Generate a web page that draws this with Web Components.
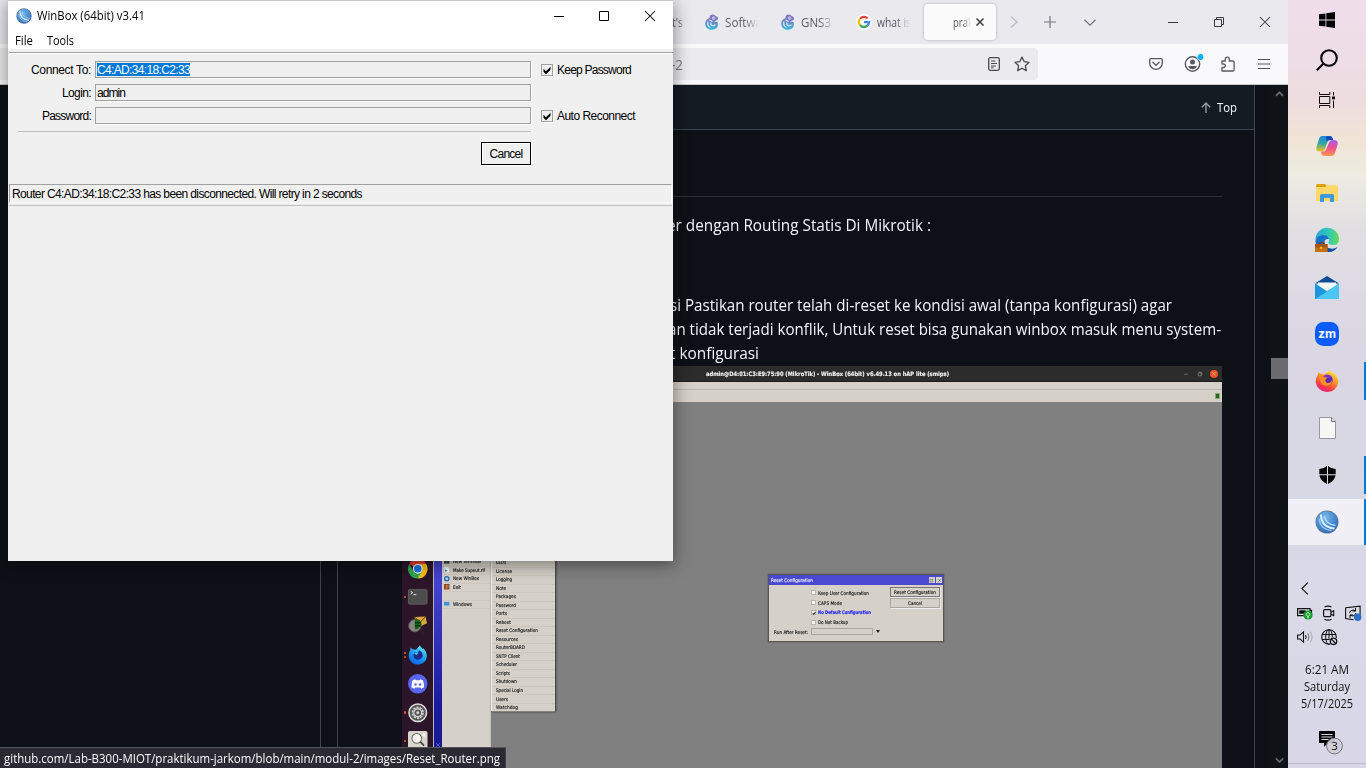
<!DOCTYPE html>
<html lang="en">
<head>
<meta charset="utf-8">
<title>Desktop</title>
<style>
html,body{margin:0;height:100%;overflow:hidden;background:#0d1117}
body{font-family:"Open Sans","Noto Sans",sans-serif;font-size:12px}
</style>
</head>
<body>
<desktop-screen>
  <browser-window slot="browser">
    <doc-page></doc-page>
  </browser-window>
  <winbox-window slot="window">
    <field-row slot="fields" label="Connect To:" lw="60"><mark><fit-text track w="93">C4:AD:34:18:C2:33</fit-text></mark></field-row>
    <field-row slot="fields" label="Login:" lw="29"><fit-text track w="28">admin</fit-text></field-row>
    <field-row slot="fields" label="Password:" lw="49"></field-row>
    <check-box slot="checks"><fit-text track w="74">Keep Password</fit-text></check-box>
    <check-box slot="checks"><fit-text track w="78">Auto Reconnect</fit-text></check-box>
    <fit-text track slot="status" w="350">Router C4:AD:34:18:C2:33 has been disconnected. Will retry in 2 seconds</fit-text>
  </winbox-window>
  <task-bar slot="taskbar"></task-bar>
</desktop-screen>
<script>
const define = (name, css, html, setup) => {
  const t = document.createElement('template');
  t.innerHTML = `<style>:host,*{box-sizing:border-box}${css}</style>${html}`;
  customElements.define(name, class extends HTMLElement {
    constructor() {
      super();
      this.attachShadow({mode: 'open'}).append(t.content.cloneNode(true));
    }
    connectedCallback() { if (setup) setup(this, this.shadowRoot); }
  });
};

const ICONS = {
  winbox: ['0 0 24 24', '<defs><radialGradient id="g" cx=".4" cy=".3" r=".8"><stop offset="0" stop-color="#7fb9ea"/><stop offset=".6" stop-color="#4289d0"/><stop offset="1" stop-color="#2a64ae"/></radialGradient></defs><circle cx="12" cy="12" r="11.5" fill="#66788c"/><circle cx="12" cy="12" r="10.8" fill="url(#g)"/><path d="M6 4.5C6 12 10 17.500 19.500 18.500" stroke="#dcecfb" stroke-width="1.900" fill="none"/><path d="M9.500 6C10 11 13 14.500 20.500 15.500" stroke="#b5d7f4" stroke-width="1.400" fill="none"/><path d="M4 9C5 15 9 20 16.500 20.500" stroke="#9dc7ee" stroke-width="1.300" fill="none"/>'],
  min: ['0 0 10 10', '<path d="M0 5.500h10" stroke="currentColor"/>'],
  max: ['0 0 10 10', '<path d="M.5.5h9v9h-9z" stroke="currentColor" fill="none"/>'],
  close: ['0 0 10 10', '<path d="M0 0l10 10M10 0L0 10" stroke="currentColor" stroke-width="1.050"/>'],
  restore: ['0 0 10 10', '<path d="M.5 2.500h7v7h-7zM2.500 2.500v-2h7v7h-2" stroke="currentColor" fill="none"/>'],
  tabclose: ['0 0 10 10', '<path d="M1.500 1.500l7 7M8.500 1.500l-7 7" stroke="#3c3b42" stroke-width="1.500"/>'],
  gns: ['0 0 16 16', '<defs><linearGradient id="g" x2="0" y2="1"><stop offset="0" stop-color="#8e6bc9"/><stop offset=".5" stop-color="#6b87c4"/><stop offset="1" stop-color="#2fb9dc"/></linearGradient></defs><path d="M6 1.500Q9-.5 11 1.500L13.500 3Q14.800 4.500 13.500 6L10 7.500 13.500 8Q14.500 12 12.500 14 10 16.300 5.500 15.500 1.200 14 1.200 9.500 1.300 5.500 5.500 4Z" fill="url(#g)"/><circle cx="9.800" cy="4" r="1.600" fill="#f3f0fa"/><circle cx="10" cy="4" r=".7" fill="#474769"/><path d="M4 7.500Q2.800 12 6.500 13.500M7 8.500q-1 2.500 1.500 3.200 2.500.2 2.500-1.500M5.500 6l3 1.500" stroke="#e6f2fb" fill="none" stroke-width="1.100"/>'],
  google: ['0 0 16 16', '<circle cx="8" cy="8" r="8" fill="#fff"/><g fill="none" stroke-width="2.300"><path d="M4 4.900A5 5 0 0 1 11.600 4.400" stroke="#ea4335"/><path d="M4 4.900A5 5 0 0 0 4 11.100" stroke="#fbbc05"/><path d="M4 11.100A5 5 0 0 0 11.300 11.700" stroke="#34a853"/><path d="M11.300 11.700A5 5 0 0 0 13 8.200H8" stroke="#4285f4"/></g>'],
  chevr: ['0 0 8 12', '<path d="M1 .5l6 5.500-6 5.500" stroke="#bab9c0" stroke-width="1.300" fill="none"/>'],
  plus: ['0 0 12 12', '<path d="M6 0v12M0 6h12" stroke="#77767e" stroke-width="1.200"/>'],
  chevd: ['0 0 12 7', '<path d="M.5.8L6 6.200 11.500.8" stroke="#77767e" stroke-width="1.300" fill="none"/>'],
  reader: ['0 0 12 14', '<rect x=".7" y=".7" width="10.600" height="12.600" rx="1.500" fill="none" stroke="#4b4a53" stroke-width="1.300"/><path d="M3 4h4.500M3 6.500h6M3 9h5M3 10.800h2.500" stroke="#4b4a53"/>'],
  star: ['0 0 16 16', '<path d="M8 1.100l2.100 4.500 4.900.7-3.600 3.400.9 4.900L8 12.200l-4.300 2.400.9-4.900L1 6.300l4.900-.7z" fill="none" stroke="#4b4a53" stroke-width="1.300" stroke-linejoin="round"/>'],
  pocket: ['0 0 14 12', '<path d="M2 .7h10q1.300 0 1.300 1.300v3.300a6.300 6 0 0 1-12.600 0V2Q.7.7 2 .7z" fill="none" stroke="#5b5a63" stroke-width="1.300"/><path d="M3.800 4.300L7 7.300l3.200-3" stroke="#5b5a63" stroke-width="1.300" fill="none" stroke-linecap="round"/>'],
  account: ['0 0 20 18', '<circle cx="8.500" cy="10" r="7.200" fill="none" stroke="#5b5a63" stroke-width="1.400"/><circle cx="8.500" cy="8" r="2.500" fill="#5b5a63"/><path d="M4.200 11.900h8.600q-1 3.300-4.300 3.300t-4.300-3.300z" fill="#5b5a63"/><circle cx="16.500" cy="3" r="3.500" fill="#f9f9fb"/><circle cx="16.500" cy="3" r="2.900" fill="#00b3ff"/>'],
  ext: ['0 0 14 16', '<path d="M1 5h3.300V3.200a2 2 0 0 1 4 0V5h3.500q1.300 0 1.300 1.300v7.400q0 1.300-1.300 1.300H1v-3.500h1.500a1.700 1.700 0 0 0 0-3.500H1z" fill="none" stroke="#5b5a63" stroke-width="1.300" stroke-linejoin="round"/>'],
  burger: ['0 0 12 12', '<path d="M0 1.500h12M0 6h12M0 10.500h12" stroke="#5b5a63" stroke-width="1.200"/>'],
  up: ['0 0 10 11', '<path d="M5 11V1M.8 5.200L5 1l4.200 4.200" stroke="#9198a1" stroke-width="1.400" fill="none"/>'],
  sup: ['0 0 10 6', '<path d="M1 5.500l4-4 4 4" stroke="#69696d" stroke-width="2" fill="none"/>'],
  sdown: ['0 0 10 6', '<path d="M1 .5l4 4 4-4" stroke="#69696d" stroke-width="2" fill="none"/>'],
  start: ['0 0 16 16', '<path d="M0 2.300L6.500 1.400V7.600H0zM7.300 1.200L16 0V7.600H7.300zM0 8.400H6.500V14.600L0 13.700zM7.300 8.400H16V16L7.300 14.800z" fill="#000"/>'],
  search: ['0 0 22 22', '<circle cx="13" cy="9" r="7.800" fill="none" stroke="#0d090b" stroke-width="2.100"/><path d="M7.300 14.700L.8 21.200" stroke="#0d090b" stroke-width="2.200"/>'],
  task: ['0 0 16 16', '<path d="M.5 4.500h10.300v7H.5zM.5 0v2.500h10.300V0M.5 16v-2.500h10.300V16M14.500 0v3.500M14.500 8.500V16" stroke="#0d090b" fill="none"/><rect x="13" y="4.500" width="3" height="2.800" fill="#000"/>'],
  copilot: ['0 0 22 20', '<defs><linearGradient id="a" x2="0" y2="1"><stop offset="0" stop-color="#1a85e4"/><stop offset=".5" stop-color="#35a8a0"/><stop offset="1" stop-color="#f2c316"/></linearGradient><linearGradient id="b" x2="0" y2="1"><stop offset="0" stop-color="#a45cf0"/><stop offset=".5" stop-color="#ef4f8e"/><stop offset="1" stop-color="#fb9a4e"/></linearGradient></defs><path d="M6 0h8q2 0 2.700 2.400L17 4h-3q-2 0-2.800 2.500L9 13q-.8 2.500-3 2.500H3.500Q-.5 15.500.4 11.500L3 3Q3.900 0 6 0z" fill="url(#a)"/><path d="M10 1Q11-.1 13.500 0 16 .1 16.700 2.500L17.200 4H13.500Q11 4 10.500 5.700z" fill="#1749b8"/><path d="M16 20H8q-2 0-2.500-2L5 15.500h2.500q2 0 2.800-2.500L13 6.500Q13.800 4 16 4h2.500q4.100.5 3.100 4.500L19 17q-.9 3-3 3z" fill="url(#b)"/>'],
  explorer: ['0 0 22 18', '<path d="M0 1.500Q0 0 1.500 0H9l1.500 1.500V5H0z" fill="#e0a012"/><path d="M0 3h9.500L11 1.300h9.500Q22 1.300 22 2.800V17H0z" fill="#ffd869"/><path d="M4 18v-6.500Q4 10 5.500 10h11Q18 10 18 11.500V18h-4v-4H8v4z" fill="#3f9ad9"/>'],
  edge: ['0 0 24 24', '<defs><linearGradient id="a"><stop offset="0" stop-color="#2aa6d8"/><stop offset=".6" stop-color="#35c9b4"/><stop offset="1" stop-color="#64de54"/></linearGradient></defs><path d="M.5 12A11.700 11.700 0 0 1 24 11q.2 6-6 6-5 0-4.500-3 1-1 .5-2.500Q12.500 7.500 8 7.500 3 7.500.5 12z" fill="url(#a)"/><path d="M.3 13Q2 7 8 7q4.500 0 6 4Q9 10.500 9.500 15q1 5.500 7 5.700 4 .2 6-1.700Q19 24.500 12 24 1 23.500.3 13z" fill="#1672c8"/><path d="M9.300 14q0 6.700 8.200 6.900 3 0 5-1.900-3 5-10 5Q6 20 9.300 14z" fill="#154e9c"/><rect y="16" width="12.500" height="8" fill="#c7700f"/><path d="M0 16h12.500v3.500H0z" fill="#a8560b"/><path d="M4 16v-1.300h4.500V16" stroke="#6f3a09" fill="none"/><rect x="5.200" y="18.800" width="2" height="2" fill="#ffd04d"/>'],
  mail: ['0 0 24 23', '<path d="M0 7.500L12 0l12 7.500z" fill="#0e4d92"/><path d="M3 6.500h18V14H3z" fill="#f4f6f8"/><path d="M0 7.500l12 8L24 7.500V23H0z" fill="#2fb0ea"/><path d="M0 23L24 7.500V23z" fill="#49c6f3"/><path d="M0 7.500l12 8L0 23z" fill="#1b96dd"/>'],
  zoom: ['0 0 24 24', '<rect width="24" height="24" rx="8.500" fill="#0b5cff"/><text x="12" y="15.800" text-anchor="middle" font-family="Inter,sans-serif" font-weight="700" font-size="12" textLength="18" lengthAdjust="spacingAndGlyphs" fill="#fff">zm</text>'],
  firefox: ['0 0 24 24', '<defs><linearGradient id="a" x1=".8" y1="0" x2=".3" y2="1"><stop offset="0" stop-color="#fff04a"/><stop offset=".4" stop-color="#ff9a20"/><stop offset=".75" stop-color="#ff3c45"/><stop offset="1" stop-color="#e2208a"/></linearGradient></defs><path d="M14.500 1Q16 3 18.500 5v-1.500Q23.500 8 23.300 13.500A11.300 10.800 0 0 1 .8 13Q.5 8.500 3 5.500L3.300 3 6 5Q8 4.800 9 5.500 10 4.500 12 3.500 13 3 14.500 1z" fill="url(#a)"/><circle cx="12.300" cy="11" r="5.500" fill="#7a35cf"/><path d="M3.500 8.500q4-2 7 0l4 .1Q14 10.500 11 11.300q-.5 2.200 1.300 2.300 2.700 0 4.700-1.800-.5 5-5.500 5T5.500 12z" fill="#ff8f1f"/><path d="M10.500 10.500q3-3.500 6-1.500 1 4-2.500 5-3 .5-3.500-1.800z" fill="#5a2fb5"/>'],
  file: ['0 0 17 22', '<path d="M.5.5h12l4 4v17H.5z" fill="#f7f7f8" stroke="#98989c"/><path d="M12.500.5v4h4" fill="#dcdce0" stroke="#77777b"/>'],
  shield: ['0 0 17 18', '<path d="M8 0v8.200H.3V3Q4.500 3 8 0zM9 0q3.500 3 7.700 3v5.200H9zM.4 9.200H8V18Q1.500 15 .4 9.200zM9 9.200h7.600Q15.500 15 9 18z" fill="#050505"/>'],
  left: ['0 0 8 14', '<path d="M7.300.7L1 7l6.300 6.300" stroke="#111" stroke-width="1.200" fill="none"/>'],
  battery: ['0 0 17 14', '<path d="M.6 2.600H13v1.700h1.500v4H13v1.300H.6z" fill="none" stroke="#111" stroke-width="1.200"/><path d="M2.200 4.300h6.500v3.500H2.200z" fill="#111"/><circle cx="11" cy="9" r="4.600" fill="#0f9d2b"/><path d="M11 6.300l2 2.200-2 2.200-2-2.200zM11 10v2.500" stroke="#fff" fill="none" stroke-width=".9"/>'],
  cam: ['0 0 14 16', '<rect x="1.600" y="4.600" width="7.300" height="7" rx="1" fill="none" stroke="#111" stroke-width="1.200"/><path d="M9 7.200l2.700-1.600v5L9 9.200M2.500 2Q6 .2 9.500 2M2.500 14.200Q6 16 9.500 14.200" stroke="#111" stroke-width="1.100" fill="none"/>'],
  sync: ['0 0 17 16', '<path d="M.6 2.800l14.500-1.700v9M.6 2.800v10.700l8 1.200" fill="none" stroke="#111" stroke-width="1.100"/><path d="M4.500 8Q5 5 8 5l2.500.8M10.500 3v3h-3M11 8Q10.500 11 7.500 11L5 10M5 13v-3h3" stroke="#111" fill="none"/><circle cx="12.700" cy="12.300" r="3.700" fill="#2b6fc9"/>'],
  sound: ['0 0 17 12', '<path d="M.6 4h2.500L6.500.9v10.200L3.100 8H.6z" fill="none" stroke="#111" stroke-width="1.100"/><path d="M8.500 4q1.300 2 0 4" stroke="#111" fill="none"/><path d="M10.800 2.300q2.500 3.700 0 7.400" stroke="#6f6f78" fill="none"/><path d="M13.300.8q3.500 5.200 0 10.400" stroke="#a9a9b4" fill="none"/>'],
  globe: ['0 0 17 17', '<circle cx="8" cy="8" r="7.300" fill="none" stroke="#111" stroke-width="1.100"/><ellipse cx="8" cy="8" rx="3.300" ry="7.300" fill="none" stroke="#111"/><path d="M1 5.500h14M1 10.500h9M8 1v9" stroke="#111"/><circle cx="12.500" cy="12.300" r="4.400" fill="#dad9e6"/><circle cx="12.500" cy="12.300" r="3.200" fill="none" stroke="#111" stroke-width="1.300"/><path d="M10.300 10l4.500 4.600" stroke="#111" stroke-width="1.300"/>'],
  notif: ['0 0 26 26', '<path d="M1 1h16v12h-7l-4 4v-4H1z" fill="#000"/><path d="M3.500 4.500h11M3.500 7h11M3.500 9.500h7" stroke="#dcdbe8"/><circle cx="16.500" cy="16" r="7.900" fill="#cfced8" fill-opacity=".93" stroke="#77767d"/><text x="16.500" y="20.200" text-anchor="middle" font-family="Open Sans,sans-serif" font-size="11.500" fill="#111">3</text>'],
  chrome: ['0 0 20 20', '<path d="M10 10L1.300 5A10 10 0 0 1 18.700 5z" fill="#e34133"/><path d="M10 10V5h8.700A10 10 0 0 1 10 20z" fill="#fbc116"/><path d="M1.300 5L5.700 12.500 10 10l4.300 2.500L10 20A10 10 0 0 1 1.300 5z" fill="#2da94f"/><circle cx="10" cy="10" r="5" fill="#fff"/><circle cx="10" cy="10" r="3.900" fill="#1a73e8"/>'],
  term: ['0 0 20 16', '<rect x=".4" y=".4" width="19.200" height="15.200" rx="1.500" fill="#4d4d4d" stroke="#6a6a6a" stroke-width=".7"/><path d="M2.800 2.500l2 1.300-2 1.300M5.500 5.800h3" stroke="#f4f4f4" stroke-width=".9" fill="none"/>'],
  shark: ['0 0 20 20', '<path d="M6.500 1l11.500-.5 1.500 7-9 4z" fill="#d8a83a"/><path d="M7 1.500l6 4.500 5-5.500" stroke="#5a3e0c" fill="none"/><circle cx="7" cy="10" r="6.300" fill="#8b8586" stroke="#5b5456"/><path d="M7 3.500Q14 3 14 9L10 13.500H7z" fill="#14661a"/><path d="M7 7h6M7 10h6" stroke="#051d06"/><path d="M12 14l4.500 5.500" stroke="#27222a" stroke-width="2.200"/>'],
  bluefox: ['0 0 20 20', '<defs><linearGradient id="a" x1=".8" y1="0" x2=".3" y2="1"><stop offset="0" stop-color="#62f1ff"/><stop offset=".5" stop-color="#1ea0f5"/><stop offset="1" stop-color="#0a5fe0"/></linearGradient></defs><path d="M12 .5l3.500 4V3Q19.500 7 19.300 11.500A9.300 9 0 0 1 .7 11Q.5 7 2.500 5V2.500L5 4.500l3.500.2z" fill="url(#a)"/><path d="M6.500 7.500l3.500.8 1.500-3Q15.500 7.500 15 11.500 13.500 15 10 15T5.500 11z" fill="#1c2a86"/><path d="M6 8h5L8.500 10.500z" fill="#40c7fa"/>'],
  discord: ['0 0 20 20', '<circle cx="10" cy="10" r="10" fill="#5865f2"/><path d="M7.500 5.500L4.800 6.500Q3.300 9.500 3.500 13.500L6.500 15l.8-1.200h5.400l.8 1.200 3-1.500q.2-4-1.300-7l-2.700-1-.6 1H8.100z" fill="#fff"/><circle cx="7.700" cy="10.700" r="1.300" fill="#5865f2"/><circle cx="12.300" cy="10.700" r="1.300" fill="#5865f2"/>'],
  gear: ['0 0 20 20', '<circle cx="10" cy="10" r="9" fill="#555" stroke="#dedede" stroke-width="1.600"/><circle cx="10" cy="10" r="5.500" fill="none" stroke="#d6d6d6" stroke-width="1.600" stroke-dasharray="2.400 1"/><circle cx="10" cy="10" r="4" fill="none" stroke="#d6d6d6" stroke-width="1.200"/><circle cx="10" cy="10" r="1.500" fill="#d6d6d6"/>'],
  finder: ['0 0 20 20', '<rect width="20" height="20" rx="2" fill="#d9d6cc"/><circle cx="9" cy="7.500" r="5" fill="#f4f4f2" stroke="#6d6c68" stroke-width="1.100"/><path d="M12.500 11l4 4" stroke="#444" stroke-width="1.800"/><circle cx="16.500" cy="4" r="1.700" fill="#f6f6f6"/>'],
  doc: ['0 0 6 6', '<path d="M.5 0h3.500L5.500 2v4h-5z" fill="#f5f8fb"/><path d="M1 2.500l3 1.500-3 1.500z" fill="#2b86c6"/>'],
  disc: ['0 0 6 6', '<circle cx="3" cy="3" r="3" fill="#2866ad"/><circle cx="3" cy="3" r="1.600" fill="#a9cbe9"/>'],
  exit: ['0 0 6 6', '<path d="M0 0h6v6H0z" fill="#8a4a22"/><path d="M2 1h2v4H2z" fill="#e0782a"/><path d="M4 1h1v3H4z" fill="#3d89d0"/>'],
  wins: ['0 0 6 6', '<path d="M0 1h6v4H0z" fill="#3d94d6"/>'],
  termrow: ['0 0 6 6', '<path d="M0 1h6v4H0z" fill="#444"/>'],
  check: ['0 0 10 10', '<path d="M1.500 3.800L4 6.300 8.500 1.800v2.900L4 9.200 1.500 6.700z" fill="#000"/>'],
};
customElements.define('ui-icon', class extends HTMLElement {
  constructor() { super(); this.attachShadow({mode: 'open'}); }
  connectedCallback() {
    const [box, body] = ICONS[this.getAttribute('name')];
    const [, , bw, bh] = box.split(' ').map(Number);
    const w = +this.getAttribute('w') || bw, h = w * bh / bw;
    this.shadowRoot.innerHTML = `<style>:host{display:block;flex:none;width:${w}px;height:${h}px}svg{display:block;overflow:visible}</style><svg width="${w}" height="${h}" viewBox="${box}">${body}</svg>`;
  }
});

define('desktop-screen', `:host{display:flex;width:1366px;height:768px;overflow:hidden;position:relative}
::slotted([slot=window]){position:absolute;left:8px;top:0}`,
'<slot name="browser"></slot><slot name="taskbar"></slot><slot name="window"></slot>');

/* WinBox login window */
define('winbox-window', `:host{display:flex;flex-direction:column;width:665px;height:561px;background:#f0f0f0;border-top:1px solid #c9c9cb;box-shadow:0 3px 16px 1px rgba(0,0,0,.42);font-family:"Liberation Sans",sans-serif;color:#000}
.title{display:flex;align-items:center;height:28px;background:#fff;padding:1px 18px 0 8px}
.title ui-icon{margin-right:5px}
.title .t{margin-right:auto;font-family:"Open Sans"}
.title .b{margin:0 0 0 36px}
.title .b[name=min]{margin-right:-1px}
.menu{display:flex;gap:14px;align-items:center;background:#fff;height:20px;padding:2px 0 0 7px;font-family:"Open Sans"}
.rule{height:2px;margin:3px 0 0 1px;background:linear-gradient(#a0a0a0 50%,#fff 50%)}
.form{display:flex;gap:10px;padding:7px 0 0 10px}
.fields{width:513px;display:flex;flex-direction:column;gap:6px}
.fields hr{width:100%;height:1px;border:0;background:#bfbfbf;margin:1px 0 0}
.checks{display:flex;flex-direction:column;gap:34px;padding-top:3px}
button{align-self:flex-end;width:50px;height:23px;margin-top:4px;background:#f0f0f0;border:1px solid #000;box-shadow:inset 1px 1px #fff,1px 1px #fff;border-radius:0;padding:0;display:grid;place-items:center;font:12px "Liberation Sans";color:#000}
.status{margin:19px 1px 0;height:19px;border:1px solid #a0a0a0;border-right-color:#fff;border-bottom-color:#fafafa;display:flex;align-items:center;padding:1px 0 0 2px}
.end{height:1px;background:#bfbfbf;margin:2px 1px 0 1px}`,
`<div class="title"><ui-icon name="winbox" w="16"></ui-icon><fit-text class="t" w="108">WinBox (64bit) v3.41</fit-text>
<ui-icon class="b" name="min"></ui-icon><ui-icon class="b" name="max"></ui-icon><ui-icon class="b" name="close"></ui-icon></div>
<div class="menu"><fit-text w="18">File</fit-text><fit-text w="27">Tools</fit-text></div>
<div class="rule"></div>
<div class="form"><div class="fields"><slot name="fields"></slot><hr><button><fit-text track w="33">Cancel</fit-text></button></div>
<div class="checks"><slot name="checks"></slot></div></div>
<div class="status"><slot name="status"></slot></div><div class="end"></div>`);

define('field-row', `:host{display:flex;align-items:center;height:17px}
.l{width:73px;display:flex;justify-content:flex-end;margin-right:4px}
.f{flex:1;height:17px;border:1px solid #a0a0a0;box-shadow:1px 1px #fff;display:flex;align-items:center;padding-left:1px}
::slotted(mark){background:#0078d7;color:#fff;height:13px;display:flex;align-items:center}
::slotted(fit-text){margin-left:0}`,
'<div class="l"></div><div class="f"><slot></slot></div>',
(el, root) => { root.querySelector('.l').innerHTML = `<fit-text track w="${el.getAttribute('lw')}">${el.getAttribute('label')}</fit-text>`; });

define('check-box', `:host{display:flex;align-items:center;height:12px;gap:4px}
.b{width:12px;height:12px;border:1px solid #a0a0a0;box-shadow:1px 1px #fff}`,
'<div class="b"><ui-icon name="check"></ui-icon></div><slot></slot>');

/* Browser chrome */
define('browser-window', `:host{display:flex;flex-direction:column;width:1288px;height:768px;position:relative;background:#0d1117}
.tabs{display:flex;height:44px;background:#eae9ee;padding-left:618px;align-items:center;color:#5b5a63;flex:none}
.tabs .n{margin-left:12px}.tabs .p{margin-left:26px}.tabs .d{margin-left:28px}
.tabs .m{margin-left:auto}.tabs .w{margin-left:36px}.w,.m{color:#3b3a41}
.w:last-child{margin-right:18px}
.bar{display:flex;height:41px;flex:none;background:#f9f9fb;border-bottom:1px solid #c8c8c8;align-items:center;color:#77767c}
.url{width:1038px;height:32px;background:#ebebed;border-radius:0 4px 4px 0;display:flex;align-items:center;padding:0 8px 0 671px;font-size:14px}
.url .r{margin:0 14px 0 auto}
.bar .k{margin-left:111px}.bar .a{margin:-3px 0 0 21px}.bar .e{margin-left:17px}.bar .h{margin-left:23px}
.tip{position:absolute;left:0;bottom:0;height:21px;width:506px;background:#2b2a33;border-top:1px solid #55545c;border-right:1px solid #45444c;color:#fbfbfe;padding:0 0 0 4px;display:flex;align-items:center}`,
`<div class="tabs"><browser-tab plain><fit-text w="11">t's</fit-text></browser-tab>
<browser-tab icon="gns"><fit-text w="37">Softwa</fit-text></browser-tab>
<browser-tab icon="gns"><fit-text w="30">GNS3</fit-text></browser-tab>
<browser-tab icon="google"><fit-text w="34">what is</fit-text></browser-tab>
<browser-tab active><fit-text w="20">prak</fit-text></browser-tab>
<ui-icon class="n" name="chevr"></ui-icon><ui-icon class="p" name="plus"></ui-icon><ui-icon class="d" name="chevd"></ui-icon>
<ui-icon class="m" name="min"></ui-icon><ui-icon class="w" name="restore"></ui-icon><ui-icon class="w" name="close"></ui-icon></div>
<div class="bar"><div class="url"><fit-text w="12">-2</fit-text><ui-icon class="r" name="reader"></ui-icon><ui-icon name="star"></ui-icon></div>
<ui-icon class="k" name="pocket"></ui-icon><ui-icon class="a" name="account"></ui-icon><ui-icon class="e" name="ext"></ui-icon><ui-icon class="h" name="burger"></ui-icon></div>
<slot></slot>
<div class="tip"><fit-text w="496">github.com/Lab-B300-MIOT/praktikum-jarkom/blob/main/modul-2/images/Reset_Router.png</fit-text></div>`);

define('browser-tab', `:host{display:flex;align-items:center;width:76px;height:36px;padding-left:10px;gap:5px;flex:none;font-size:12.500px;color:#5b5a63}
:host([plain]){padding-left:54px}
:host([active]){width:72px;margin:0 2px;background:#fbfbfc;border-radius:4px;box-shadow:0 0 3px rgba(0,0,0,.28);padding-left:29px;gap:4px}
.t{width:34px;overflow:hidden;-webkit-mask:linear-gradient(90deg,#000 55%,transparent)}
:host([plain]) .t{width:13px}
:host([active]) .t{width:18px}.x{display:none}:host([active]) .x{display:block}`,
'<span class="i"></span><div class="t"><slot></slot></div><ui-icon class="x" name="tabclose"></ui-icon>',
(el, root) => { const n = el.getAttribute('icon'), i = root.querySelector('.i'); n ? i.innerHTML = `<ui-icon name="${n}"></ui-icon>` : i.remove(); });

/* Rendered document */
define('doc-page', `:host{display:flex;flex:1;min-height:0;overflow:hidden;color:#f0f6fc;font-size:16px}
.side{width:321px;border-right:1px solid #3d444d}
.main{width:918px;margin-left:16px;border:solid #3d444d;border-width:0 1px;display:flex;flex-direction:column;min-height:0}
.head{height:45px;flex:none;background:#151b23;border-bottom:1px solid #3d444d;display:flex;align-items:center;justify-content:flex-end;gap:6px;padding-right:17px;font-size:12.500px}
.body{height:67px;margin:0 32px;border-bottom:1px solid #2b3139;flex:none}
.ln{height:24px;display:flex;align-items:center;flex:none}
.l1{margin:16px 0 0 329px}.l2{margin:56px 0 0 332px}.l3{margin-left:330px}.l4{margin-left:332px}
remote-shot{margin-left:64px;flex:none}
.scroll{width:17px;margin-left:auto;display:flex;flex-direction:column;align-items:center;background:#0f1217;padding:6px 0 5px}
.thumb{width:17px;height:21px;background:#6b6b70;margin:262px 0 auto}`,
`<div class="side"></div><div class="main"><div class="head"><ui-icon name="up"></ui-icon><fit-text w="20">Top</fit-text></div>
<div class="body"></div>
<div class="ln l1"><fit-text w="264">er dengan Routing Statis Di Mikrotik :</fit-text></div>
<div class="ln l2"><fit-text w="502">si Pastikan router telah di-reset ke kondisi awal (tanpa konfigurasi) agar</fit-text></div>
<div class="ln l3"><fit-text w="553">an tidak terjadi konflik, Untuk reset bisa gunakan winbox masuk menu system-</fit-text></div>
<div class="ln l4"><fit-text w="89">t konfigurasi</fit-text></div>
<remote-shot></remote-shot></div>
<div class="scroll"><ui-icon name="sup" w="9"></ui-icon><div class="thumb"></div><ui-icon name="sdown" w="9"></ui-icon></div>`);

/* Illustration inside the document: an Ubuntu desktop running WinBox */
const dock = [['chrome', 0], ['term', 1], ['shark', 0], ['bluefox', 2], ['discord', 0], ['gear', 1], ['finder', 1]];
const items = ['LEDs', 'License', 'Logging', 'Note', 'Packages', 'Password', 'Ports', 'Reboot', 'Reset Configuration', 'Resources', 'RouterBOARD', 'SNTP Client', 'Scheduler', 'Scripts', 'Shutdown', 'Special Login', 'Users', 'Watchdog'];
const widths = [10, 16, 16, 10, 20, 20, 11, 15, 42, 22, 29, 24, 21, 14, 21, 27, 12, 22];
const left = [['termrow', 'New Terminal', 28], ['doc', 'Make Supout.rif', 32], ['disc', 'New WinBox', 26], ['exit', 'Exit', 8], ['', '', 0], ['wins', 'Windows', 19]];
define('remote-shot', `:host{display:flex;width:820px;height:403px;overflow:hidden;font-family:"DejaVu Sans",sans-serif;color:#222;font-size:4.900px;-webkit-text-stroke:.16px currentColor;margin-top:1px}
.dock{width:31px;background:#2c1529;padding:188px 0 0;display:flex;flex-direction:column}
.dock div{height:28.800px;flex:none;display:flex;align-items:center}
.dock i{width:6px;display:flex;flex-direction:column;align-items:center;gap:1.500px}
.dock b{width:2.400px;height:2.400px;border-radius:50%;background:#e95420}
.win{flex:1;display:flex;flex-direction:column}
.tt{height:16px;background:#2c2c2c;border-bottom:1px solid #1b1b1b;display:grid;grid-template-columns:1fr auto 1fr;align-items:center;color:#f0f0f0;font-weight:700;font-size:6px}
.tt .c{display:flex;justify-content:flex-end;align-items:center;gap:10px;padding-right:4px;color:#bbb}
.tt .o{width:8px;height:8px;border-radius:50%;background:#e95420;display:grid;place-items:center;color:#fff;margin-left:-1.500px}
.tb{height:20px;background:#d5d0c8;display:flex;flex-direction:column}
.tb div{height:7.500px;border-bottom:1px solid #bab6ae}
.tb span{width:5px;height:6px;background:#2b6b14;border:1px solid #8ba37f;margin:3px 2px 0 auto}
.ws{flex:1;display:flex;background:#808080;position:relative;min-height:0}
.strip{width:9px;border-left:1px solid #b9b5c9;display:flex;align-items:flex-end;justify-content:center;padding-bottom:22px;color:#aaaae8;background:linear-gradient(#4443cc 50%,#1c1a9c 82%,#1a178e)}
.lm{width:49px;background:#d5d0c8;padding-top:155px;border-right:1px solid #c4c0b8}
.lm div{height:8.530px;display:flex;align-items:center;gap:3px;padding-left:2px;box-shadow:0 .5px #c5c0b8}
.sm{width:64px;height:309px;background:#d5d0c8;box-shadow:1px 1px 2px #333;padding-top:156px;border-left:1px solid #eee}
.sm div{height:8.530px;display:flex;align-items:center;padding-left:4px;box-shadow:0 .5px #c2bdb5}
reset-dialog{position:absolute;left:335px;top:172px}`,
`<div class="dock">${dock.map(([n, d]) => `<div><i>${'<b></b>'.repeat(d)}</i><ui-icon name="${n}" w="19.500"></ui-icon></div>`).join('')}</div>
<div class="win"><div class="tt"><span></span><fit-text w="243">admin@D4:01:C3:E9:75:90 (MikroTik) - WinBox (64bit) v6.49.13 on hAP lite (smips)</fit-text><div class="c"><ui-icon name="min" w="4"></ui-icon><ui-icon name="restore" w="4"></ui-icon><span class="o"><ui-icon name="close" w="3.500"></ui-icon></span></div></div>
<div class="tb"><div></div><span></span></div>
<div class="ws"><div class="strip"><ui-icon name="close" w="4"></ui-icon></div>
<div class="lm">${left.map(([i, t, w]) => `<div>${i ? `<ui-icon name="${i}" w="5.500"></ui-icon><fit-text w="${w}">${t}</fit-text>` : ''}</div>`).join('')}</div>
<div class="sm">${items.map((t, i) => `<div><fit-text w="${widths[i]}">${t}</fit-text></div>`).join('')}</div>
<reset-dialog></reset-dialog></div></div>`);

define('reset-dialog', `:host{display:block;width:176px;height:68px;background:#d5d0c8;border:1px solid #555;box-shadow:0 0 1px #333;color:#222}
.t{height:10px;background:#4a4ad0;color:#e6e6fa;display:flex;align-items:center;gap:1.500px;padding:0 1px 0 2px}
.t fit-text{margin-right:auto}
.t span{width:6px;height:6px;background:#d5d0c8;display:grid;place-items:center;color:#111}
.b{display:flex;padding:2px 3px 0 5px;justify-content:space-between}
.c{padding:1px 0 0 37px}
.c div{display:flex;align-items:center;gap:2px;height:9.800px}
.c span{width:5px;height:5px;background:#fff;border:.5px solid #b9b5ae;display:grid;place-items:center}
.on{color:#2525f0;font-weight:700}
.k{display:flex;flex-direction:column;gap:1px}
.k div{width:50px;height:10px;border:1px solid #aaa69e;display:grid;place-items:center;box-shadow:1px 1px #eee}
.k div:first-child{border-color:#777}
.r{display:flex;align-items:center;gap:3px;padding-left:5px;margin-top:1px}
.r div{width:62px;height:7px;border:1px solid #aaa69e}
.r b{border:2.200px solid transparent;border-top-color:#222;border-bottom:0;border-top-width:3px}`,
`<div class="t"><fit-text w="42">Reset Configuration</fit-text><span><ui-icon name="max" w="3"></ui-icon></span><span><ui-icon name="close" w="3"></ui-icon></span></div>
<div class="b"><div class="c"><div><span></span><fit-text w="51">Keep User Configuration</fit-text></div><div><span></span><fit-text w="24">CAPS Mode</fit-text></div><div class="on"><span><ui-icon name="check" w="4"></ui-icon></span><fit-text w="53">No Default Configuration</fit-text></div><div><span></span><fit-text w="30">Do Not Backup</fit-text></div></div>
<div class="k"><div><fit-text w="42">Reset Configuration</fit-text></div><div><fit-text w="14">Cancel</fit-text></div></div></div>
<div class="r"><fit-text w="34">Run After Reset:</fit-text><div></div><b></b></div>`);

/* Vertical taskbar */
define('task-item', `:host{display:grid;place-items:center;height:40px;width:78px;flex:none}
:host([app]){height:46px;margin-bottom:1px}
:host([run]){background:linear-gradient(#0078d7,#0078d7) right center/2px 38px no-repeat}
:host([active]){background:linear-gradient(#0078d7,#0078d7) right center/2px 46px no-repeat,#efeff5}`,
'<slot></slot>');
define('task-bar', `:host{display:flex;flex-direction:column;width:78px;height:768px;color:#111;background:linear-gradient(#f1deeb 0,#eddde5 60px,#eeddde 105px,#f0e5d6 140px,#edebe2 175px,#e2dfe3 230px,#dcd9e4 300px,#dad6e3 370px,#d7d8e4 440px,#d9d9e7 600px,#d9d7e7 768px)}
.gap{height:3px;flex:none}
.more{padding:36px 0 0 13px}
.tray{display:grid;grid-template-columns:repeat(3,24px);grid-auto-rows:24px;place-items:center;padding:6px 0 0 5px}
.clock{display:flex;flex-direction:column;align-items:center;margin-top:12px;line-height:17px}
.nt{margin:18px 0 0 30px}.line{height:1px;background:#bcbbc8;margin:auto 0 4px}`,
`<task-item><ui-icon name="start"></ui-icon></task-item><task-item><ui-icon name="search"></ui-icon></task-item><task-item><ui-icon name="task"></ui-icon></task-item><div class="gap"></div>
${['copilot', 'explorer', 'edge', 'mail', 'zoom'].map(n => `<task-item app><ui-icon name="${n}"></ui-icon></task-item>`).join('')}
<task-item app run><ui-icon name="firefox"></ui-icon></task-item><task-item app><ui-icon name="file"></ui-icon></task-item><task-item app run><ui-icon name="shield"></ui-icon></task-item><task-item app active><ui-icon name="winbox"></ui-icon></task-item>
<div class="more"><ui-icon name="left" w="7.500"></ui-icon></div>
<div class="tray"><ui-icon name="battery"></ui-icon><ui-icon name="cam"></ui-icon><ui-icon name="sync"></ui-icon><ui-icon name="sound"></ui-icon><ui-icon name="globe"></ui-icon></div>
<div class="clock"><fit-text w="44">6:21 AM</fit-text><fit-text w="46">Saturday</fit-text><fit-text w="52">5/17/2025</fit-text></div>
<ui-icon class="nt" name="notif"></ui-icon><div class="line"></div>`);

/* A single line of text fitted to an exact width, by scaling or (track) by letter spacing;
   registered last so inherited fonts are settled */
customElements.define('fit-text', class extends HTMLElement {
  constructor() {
    super();
    this.attachShadow({mode: 'open'}).innerHTML = '<style>:host{display:block;flex:none;white-space:nowrap}span{display:inline-block;transform-origin:0 50%}</style><span><slot></slot></span>';
  }
  connectedCallback() {
    const s = this.shadowRoot.querySelector('span'), w = +this.getAttribute('w');
    const n = s.getBoundingClientRect().width;
    this.style.width = w + 'px';
    if (!n) return;
    if (this.hasAttribute('track')) s.style.letterSpacing = (w - n) / this.textContent.length + 'px';
    else s.style.transform = `scaleX(${w / n})`;
  }
});
</script>
</body>
</html>
